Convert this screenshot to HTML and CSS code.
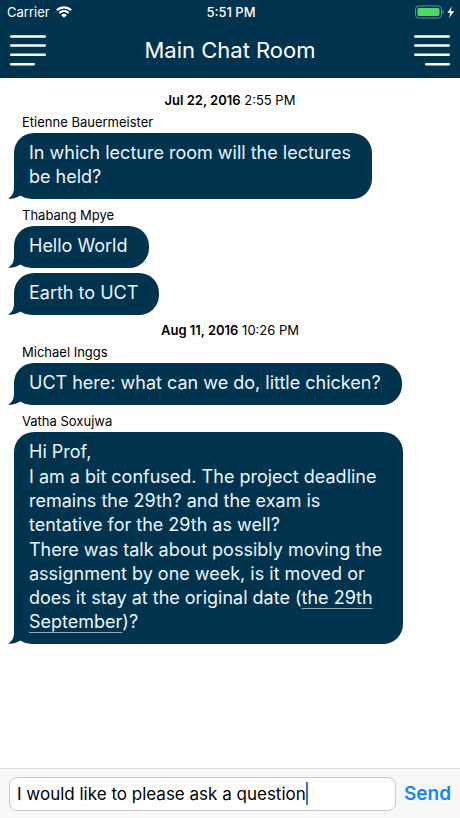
FILE: index.html
```html
<!DOCTYPE html>
<html lang="en">
<head>
<meta charset="utf-8">
<meta name="viewport" content="width=device-width, initial-scale=1">
<title>Main Chat Room</title>
<link rel="stylesheet" href="styles.css">
</head>
<body>
<header class="header">
  <div class="status">
    <div class="status-left">
      <span>Carrier</span>
      <svg width="16" height="12" viewBox="0 0 16 12" aria-hidden="true">
        <path d="M.8 4.200C5 .5 11 .5 15.200 4.200M3.300 6.900c2.700-2.400 6.700-2.400 9.400 0" fill="none" stroke="#fff" stroke-width="2.200"/>
        <path d="M5.200 8.900c1.600-1.400 4-1.400 5.600 0L8 11.700z" fill="#fff"/>
      </svg>
    </div>
    <span class="clock">5:51 PM</span>
    <div class="status-right">
      <svg width="40" height="14" viewBox="0 0 40 14" aria-hidden="true">
        <rect x=".5" y=".9" width="26" height="12.200" rx="3.400" fill="none" stroke="#6f8d9c"/>
        <rect x="2.500" y="2.900" width="22" height="8.200" rx="1.600" fill="#4cd964"/>
        <path d="M27.700 5c1.700.7 1.700 3.300 0 4z" fill="#6f8d9c"/>
        <path d="M36.800 1.200 32.400 8h3l-1.600 5.200 5.400-6.900h-3.400z" fill="#fff"/>
      </svg>
    </div>
  </div>
  <div class="navbar">
    <button class="menu" type="button" aria-label="Open menu">
      <svg width="36" height="32" viewBox="0 0 36 32"><path d="M1.300 2.500h33.400M1.300 11.500h33.400M1.300 20.800h33.400M1.300 30.200h22.400"/></svg>
    </button>
    <h1 class="title">Main Chat Room</h1>
    <button class="menu" type="button" aria-label="Open participants">
      <svg width="36" height="32" viewBox="0 0 36 32"><path d="M1.300 2.500h33.400M1.300 11.500h33.400M1.300 20.800h33.400M12.300 30.200h22.400"/></svg>
    </button>
  </div>
</header>

<main class="chat">
  <p class="date"><b>Jul 22, 2016</b> 2:55 PM</p>
  <section class="group">
    <h2 class="author">Etienne Bauermeister</h2>
    <div class="bubble"><p>In which lecture room will the lectures<br>be held?</p>
      <svg class="tail" width="24" height="20" viewBox="0 0 24 20" aria-hidden="true"><path d="M6 0v8C6 13.500 4.500 17 0 19.600 5 20 9 18.800 12.500 16.500 16 18.700 19 19.600 24 20V0z"/></svg>
    </div>
  </section>
  <section class="group">
    <h2 class="author">Thabang Mpye</h2>
    <div class="bubble"><p>Hello World</p>
      <svg class="tail" width="24" height="20" viewBox="0 0 24 20" aria-hidden="true"><path d="M6 0v8C6 13.500 4.500 17 0 19.600 5 20 9 18.800 12.500 16.500 16 18.700 19 19.600 24 20V0z"/></svg>
    </div>
    <div class="bubble"><p>Earth to UCT</p>
      <svg class="tail" width="24" height="20" viewBox="0 0 24 20" aria-hidden="true"><path d="M6 0v8C6 13.500 4.500 17 0 19.600 5 20 9 18.800 12.500 16.500 16 18.700 19 19.600 24 20V0z"/></svg>
    </div>
  </section>
  <p class="date"><b>Aug 11, 2016</b> 10:26 PM</p>
  <section class="group">
    <h2 class="author">Michael Inggs</h2>
    <div class="bubble"><p>UCT here: what can we do, little chicken?</p>
      <svg class="tail" width="24" height="20" viewBox="0 0 24 20" aria-hidden="true"><path d="M6 0v8C6 13.500 4.500 17 0 19.600 5 20 9 18.800 12.500 16.500 16 18.700 19 19.600 24 20V0z"/></svg>
    </div>
  </section>
  <section class="group">
    <h2 class="author">Vatha Soxujwa</h2>
    <div class="bubble">
      <p>Hi Prof,</p>
      <p>I am a bit confused. The project deadline<br>remains the 29th? and the exam is<br>tentative for the 29th as well?</p>
      <p>There was talk about possibly moving the<br>assignment by one week, is it moved or<br>does it stay at the original date (<a href="#date">the 29th<br>September</a>)?</p>
      <svg class="tail" width="24" height="20" viewBox="0 0 24 20" aria-hidden="true"><path d="M6 0v8C6 13.500 4.500 17 0 19.600 5 20 9 18.800 12.500 16.500 16 18.700 19 19.600 24 20V0z"/></svg>
    </div>
  </section>
</main>

<form class="composer">
  <div class="field">
    <input class="message" type="text" aria-label="Message" value="I would like to please ask a question">
    <span class="caret"></span>
  </div>
  <button class="send" type="button">Send</button>
</form>
</body>
</html>
```
FILE: styles.css
```css
* {
  box-sizing: border-box;
}

body {
  margin: 0;
  min-height: 100vh;
  display: flex;
  flex-direction: column;
  background: #fff;
  color: #000;
  font-family: Inter, "Liberation Sans", sans-serif;
}

p, h1, h2 {
  margin: 0;
  font-weight: 400;
}

button {
  padding: 0;
  border: 0;
  background: none;
  font-family: inherit;
}

.header {
  height: 78px;
  background: #00334d;
  color: #fff;
}

.status {
  display: grid;
  grid-template-columns: 1fr auto 1fr;
  align-items: center;
  height: 24px;
  padding: 0 5px 0 7px;
  font-size: 13px;
}

.status-left {
  display: flex;
  align-items: center;
  gap: 6px;
}

.status-right {
  display: flex;
  justify-content: flex-end;
}

.clock {
  font-weight: 500;
}

.navbar {
  display: flex;
  align-items: center;
  justify-content: space-between;
  height: 52px;
  padding: 0 10px;
}

.menu svg {
  display: block;
  fill: none;
  stroke: #fff;
  stroke-width: 2.6;
  stroke-linecap: round;
}

.title {
  font-size: 22px;
}

.chat {
  flex: 1;
  padding: 12px 14px;
}

.date {
  font-size: 13px;
  line-height: 21px;
  text-align: center;
}

.date b {
  font-weight: 600;
}

.author {
  padding-left: 8px;
  font-size: 13px;
  line-height: 22px;
}

/* The second gradient stops short of the lower left corner, which the tail draws. */
.bubble {
  position: relative;
  isolation: isolate;
  display: flex;
  flex-direction: column;
  gap: 1px;
  width: fit-content;
  margin-bottom: 5px;
  padding: 8px 21px 10px 15px;
  border-radius: 20px 20px 20px 0;
  background:
    linear-gradient(#00334d, #00334d) 0 0 / 100% calc(100% - 19px) no-repeat,
    linear-gradient(#00334d, #00334d) 100% 100% / calc(100% - 17px) 20px no-repeat;
  color: #eaf6ff;
  font-size: 18px;
  line-height: 24px;
}

.bubble a {
  color: inherit;
  text-decoration-thickness: 1px;
  text-underline-offset: 4px;
  text-decoration-skip-ink: none;
  text-decoration-color: #8fa9b8;
}

.tail {
  position: absolute;
  left: -6px;
  bottom: 0;
  z-index: -1;
  fill: #00334d;
}

.composer {
  display: flex;
  align-items: center;
  gap: 8px;
  height: 50px;
  padding: 0 9px;
  border-top: 1px solid #dcdcde;
  background: #f8f8f8;
}

.field {
  flex: 1;
  display: flex;
  align-items: center;
  height: 34px;
  padding: 0 7px;
  border: 1px solid #c8c8cd;
  border-radius: 8px;
  background: #fff;
}

.message {
  field-sizing: content;
  padding: 0;
  border: 0;
  outline: 0;
  background: none;
  color: #000;
  font-family: inherit;
  font-size: 17px;
}

.caret {
  width: 2px;
  height: 23px;
  background: #4a68d8;
}

.send {
  color: #1686f5;
  font-size: 19px;
  font-weight: 600;
}
```
